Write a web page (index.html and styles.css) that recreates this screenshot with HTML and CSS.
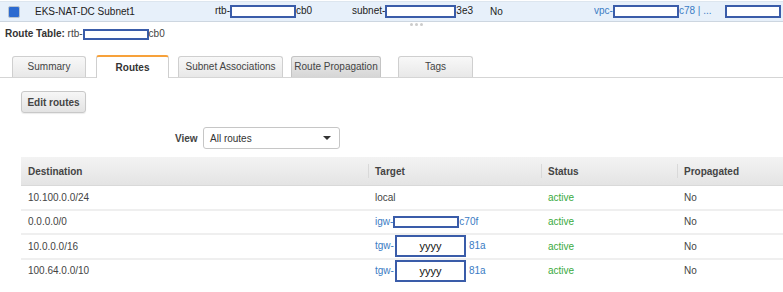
FILE: index.html
```html
<!DOCTYPE html>
<html>
<head>
    <title>Route Table - Routes</title>
    <link rel="stylesheet" href="styles.css">
</head>
<body>
    <div class="selected-row">
        <div class="cell cell-check"><span class="checkbox"></span></div>
        <div class="cell cell-name">EKS-NAT-DC Subnet1</div>
        <div class="cell cell-rtb">rtb-<span class="redact redact-top"></span>cb0</div>
        <div class="cell cell-subnet">subnet-<span class="redact redact-subnet"></span>3e3</div>
        <div class="cell cell-main">No</div>
        <div class="cell cell-vpc"><span class="link">vpc-</span><span class="redact redact-top"></span><span class="link">c78 | ...</span></div>
        <div class="cell cell-owner"><span class="redact redact-owner"></span></div>
    </div>

    <div class="resize-handle"><span></span><span></span><span></span></div>

    <div class="route-table-title">
        <b>Route Table:</b> rtb-<span class="redact redact-title"></span>cb0
    </div>

    <div class="tabs">
        <div class="tab tab-summary">Summary</div>
        <div class="tab tab-routes active">Routes</div>
        <div class="tab tab-assoc">Subnet Associations</div>
        <div class="tab tab-prop hover">Route Propagation</div>
        <div class="tab tab-tags">Tags</div>
    </div>

    <div class="toolbar">
        <button class="edit-button">Edit routes</button>
    </div>

    <div class="view-row">
        <label class="view-label">View</label>
        <div class="select">
            <span>All routes</span>
            <span class="caret"></span>
        </div>
    </div>

    <table class="routes-table">
        <thead>
            <tr>
                <th class="col-dest">Destination</th>
                <th class="col-target">Target</th>
                <th class="col-status">Status</th>
                <th class="col-prop">Propagated</th>
            </tr>
        </thead>
        <tbody>
            <tr>
                <td>10.100.0.0/24</td>
                <td>local</td>
                <td class="status-active">active</td>
                <td>No</td>
            </tr>
            <tr>
                <td>0.0.0.0/0</td>
                <td><span class="link">igw-</span><span class="redact redact-igw"></span><span class="link">c70f</span></td>
                <td class="status-active">active</td>
                <td>No</td>
            </tr>
            <tr>
                <td>10.0.0.0/16</td>
                <td><span class="link">tgw-</span><span class="redact redact-tgw">yyyy</span><span class="link">81a</span></td>
                <td class="status-active">active</td>
                <td>No</td>
            </tr>
            <tr>
                <td>100.64.0.0/10</td>
                <td><span class="link">tgw-</span><span class="redact redact-tgw">yyyy</span><span class="link">81a</span></td>
                <td class="status-active">active</td>
                <td>No</td>
            </tr>
        </tbody>
    </table>
</body>
</html>
```

FILE: styles.css
```css
body {
    margin: 0;
    font-family: "Liberation Sans", Arial, sans-serif;
    font-size: 10px;
    color: #333;
    background: #fff;
}
.link {
    color: #3b7cc4;
}
.redact {
    display: inline-block;
    box-sizing: border-box;
    border: 2px solid #3a5ca9;
    background: #fff;
    vertical-align: middle;
}
.redact-top {
    width: 66px;
    height: 13px;
}
.redact-subnet {
    width: 71px;
    height: 13px;
}
.redact-owner {
    width: 56px;
    height: 13px;
}
.redact-title {
    width: 66px;
    height: 11px;
}
.redact-igw {
    width: 66px;
    height: 12px;
}
.redact-tgw {
    width: 71px;
    height: 22px;
    margin: 0 3px 0 1px;
    text-align: center;
    line-height: 18px;
    font-size: 11px;
    color: #111;
}

/* selected subnet row */
.selected-row {
    display: grid;
    grid-template-columns: 35px 180px 137px 138px 104px 131px auto;
    align-items: center;
    height: 19px;
    margin-top: 1px;
    background: #e7f0fa;
    border-top: 1px solid #dde6ef;
    border-bottom: 1px solid #cdd6e0;
    color: #222;
}
.cell {
    white-space: nowrap;
    overflow: hidden;
}
.cell-check {
    padding-left: 8px;
    display: flex;
    align-items: center;
}
.checkbox {
    display: inline-block;
    box-sizing: border-box;
    width: 12px;
    height: 12px;
    border: 1px solid #b9c4d0;
    border-radius: 2px;
    background: #2c6ad0;
}
.resize-handle {
    display: flex;
    gap: 2px;
    height: 5px;
    align-items: center;
    margin-left: 410px;
}
.resize-handle span {
    width: 3px;
    height: 3px;
    border-radius: 50%;
    background: #ccc;
}
.route-table-title {
    padding-left: 5px;
    height: 14px;
    line-height: 14px;
    color: #444;
}
.route-table-title b {
    color: #333;
}

/* tabs */
.tabs {
    display: flex;
    align-items: flex-end;
    margin-top: 14px;
    padding-left: 12px;
    height: 22px;
    border-bottom: 1px solid #d5d5d5;
}
.tab {
    box-sizing: border-box;
    flex-shrink: 0;
    white-space: nowrap;
    height: 21px;
    line-height: 20px;
    text-align: center;
    color: #444;
    border: 1px solid #cfcfcf;
    border-bottom: none;
    border-radius: 3px 3px 0 0;
    background: linear-gradient(#f8f8f8, #e8e8e8);
}
.tab.hover {
    background: linear-gradient(#ececec, #d6d6d6);
    border-color: #c4c4c4;
}
.tab.active {
    height: 23px;
    line-height: 22px;
    background: #fff;
    border-top: 2px solid #f7a13a;
    font-weight: bold;
    color: #333;
    margin-bottom: -1px;
}
.tab-summary { width: 74px; margin-right: 10px; }
.tab-routes { width: 73px; margin-right: 9px; }
.tab-assoc { width: 105px; margin-right: 8px; }
.tab-prop { width: 90px; margin-right: 17px; }
.tab-tags { width: 75px; }

.toolbar {
    padding: 13px 0 0 21px;
}
.edit-button {
    box-sizing: border-box;
    display: block;
    width: 65px;
    height: 22px;
    padding: 0;
    font-family: inherit;
    font-size: 10px;
    font-weight: bold;
    color: #444;
    border: 1px solid #c8c8c8;
    border-radius: 3px;
    background: linear-gradient(#f6f6f6, #e3e3e3);
    box-shadow: 0 1px 1px rgba(0,0,0,0.08);
}

.view-row {
    display: flex;
    align-items: center;
    margin-top: 14px;
    padding-left: 175px;
    height: 22px;
}
.view-label {
    font-weight: bold;
    color: #444;
    width: 28px;
}
.select {
    box-sizing: border-box;
    width: 137px;
    height: 22px;
    display: flex;
    align-items: center;
    justify-content: space-between;
    padding: 0 8px 0 6px;
    border: 1px solid #c6c6c6;
    border-radius: 3px;
    background: #fff;
    color: #333;
}
.caret {
    width: 0;
    height: 0;
    border-left: 4px solid transparent;
    border-right: 4px solid transparent;
    border-top: 4px solid #333;
}

/* routes table */
.routes-table {
    margin: 8px 0 0 21px;
    width: 762px;
    border-collapse: collapse;
    table-layout: fixed;
}
.routes-table th {
    position: relative;
    height: 28px;
    padding: 0 0 0 7px;
    text-align: left;
    font-weight: bold;
    color: #444;
    background: linear-gradient(#f3f3f3, #e4e4e4);
    border-bottom: 1px solid #d9d9d9;
}
.routes-table th + th::before {
    content: "";
    position: absolute;
    left: 0;
    top: 7px;
    bottom: 7px;
    border-left: 1px solid #d9d9d9;
}
.col-dest { width: 340px; }
.col-target { width: 166px; }
.col-status { width: 129px; }
.col-prop { width: 99px; }
.routes-table td {
    height: 22.5px;
    padding: 0 0 0 7px;
    border-bottom: 2px solid #efefef;
    color: #444;
    white-space: nowrap;
}
.routes-table tbody tr:last-child td {
    border-bottom: none;
}
.routes-table td.status-active {
    color: #3aaa3e;
}
```
